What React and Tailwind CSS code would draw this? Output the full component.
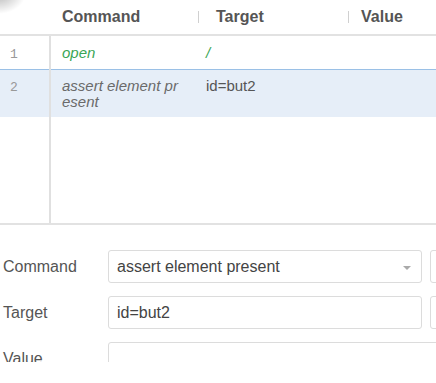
import React from "react";

const rows = [
  { id: 1, command: "open", target: "/", value: "", ok: true },
  { id: 2, command: "assert element present", target: "id=but2", value: "", selected: true },
];

function Field({ label, value, select, wide }) {
  return (
    <div className="flex items-center h-[33px]">
      <div className="w-[108px] shrink-0 pl-[3px] text-[16px] text-[#555]">{label}</div>
      <div
        className={
          "relative flex items-center h-[33px] shrink-0 border border-[#dcdcdc] rounded-[3px] bg-white px-[8px] text-[16px] text-[#444] " +
          (wide ? "w-[340px]" : "w-[314px]")
        }
      >
        {value}
        {select && (
          <span className="absolute right-[10px] top-[15px] w-0 h-0 border-l-[4px] border-r-[4px] border-t-[4px] border-l-transparent border-r-transparent border-t-[#aaa]" />
        )}
      </div>
      {!wide && <div className="ml-[8px] w-[30px] h-[33px] shrink-0 border border-[#dcdcdc] rounded-[3px]" />}
    </div>
  );
}

export default function App() {
  return (
    <div className="relative w-[436px] h-[383px] overflow-hidden bg-white font-['Liberation_Sans',Arial,sans-serif]">
      {/* corner shadow */}
      <div className="absolute left-[-30px] top-[-28px] w-[56px] h-[42px] rounded-full bg-[radial-gradient(closest-side,rgba(0,0,0,0.6),rgba(0,0,0,0))] opacity-50" />

      {/* table */}
      <div className="h-[225px] border-b-2 border-[#e2e2e2] flex flex-col">
        <div className="flex h-[36px] border-b-2 border-[#e2e2e2] items-center text-[16px] font-bold text-[#555]">
          <div className="w-[51px] shrink-0" />
          <div className="w-[147px] shrink-0 pl-[11px]">Command</div>
          <div className="w-[150px] shrink-0 flex items-center">
            <span className="w-px h-[12px] bg-[#d0d0d0]" />
            <span className="ml-[17px]">Target</span>
          </div>
          <div className="flex-1 flex items-center">
            <span className="w-px h-[12px] bg-[#d0d0d0]" />
            <span className="ml-[12px]">Value</span>
          </div>
        </div>
        <div className="flex flex-1">
          <div className="w-[51px] shrink-0 border-r-2 border-[#e0e0e0]">
            {rows.map((r) => (
              <div
                key={r.id}
                className={
                  "font-['Liberation_Mono',monospace] text-[13px] text-[#999] pl-[10px] " +
                  (r.selected ? "h-[48px] pt-[8px] bg-[#e6eef8] border-t border-[#9ac0e6]" : "h-[33px] pt-[9px]")
                }
              >
                {r.id}
              </div>
            ))}
          </div>
          <div className="flex-1">
            {rows.map((r) => (
              <div
                key={r.id}
                className={
                  "flex text-[15px] leading-[16px] " +
                  (r.selected ? "h-[48px] pt-[8px] bg-[#e6eef8] border-t border-[#9ac0e6]" : "h-[33px] pt-[9px]")
                }
              >
                <div
                  className={
                    "w-[155px] shrink-0 pl-[11px] pr-[22px] italic break-all " +
                    (r.ok ? "text-[#3aa655]" : "text-[#6a6a6a]")
                  }
                >
                  {r.command}
                </div>
                <div className={"w-[150px] shrink-0 " + (r.ok ? "italic text-[#3aa655]" : "text-[#555]")}>
                  {r.target}
                </div>
                <div className="flex-1 text-[#555]">{r.value}</div>
              </div>
            ))}
          </div>
        </div>
      </div>

      {/* form */}
      <div className="h-[137px] overflow-hidden flex flex-col gap-[13px] pt-[25px]">
        <Field label="Command" value="assert element present" select />
        <Field label="Target" value="id=but2" />
        <Field label="Value" value="" wide />
      </div>
    </div>
  );
}
